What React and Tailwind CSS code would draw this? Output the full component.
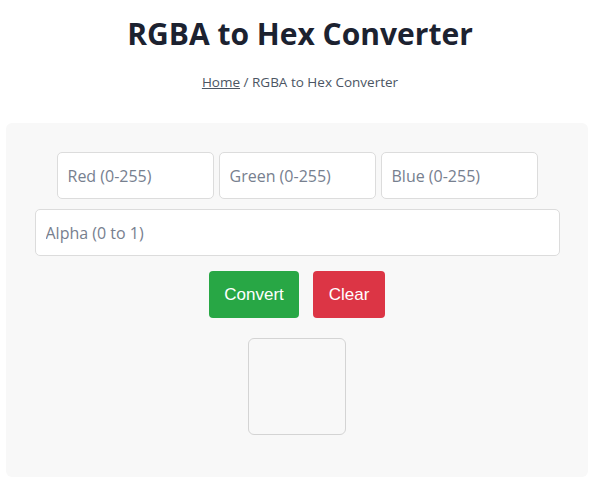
import { useState } from 'react'

const fieldClass =
  'h-[47px] rounded-[5px] border border-[#dcdcdc] bg-white px-[10px] text-[16px] text-[#374151] placeholder:text-[#77808f] outline-none'

const App = () => {
  const [rgba, setRgba] = useState({ r: '', g: '', b: '', a: '' })
  const [hex, setHex] = useState('')

  const convert = () => {
    const toHex = (n) => Math.max(0, Math.min(255, Math.round(Number(n) || 0))).toString(16).padStart(2, '0')
    const alpha = rgba.a === '' ? 1 : Number(rgba.a)
    setHex('#' + toHex(rgba.r) + toHex(rgba.g) + toHex(rgba.b) + toHex(alpha * 255))
  }

  const clear = () => {
    setRgba({ r: '', g: '', b: '', a: '' })
    setHex('')
  }

  return (
    <div className="min-h-[495px] bg-white font-['Open_Sans','Noto_Sans',sans-serif] text-[#1f2937]">
      <h1 className="pt-[14px] text-center text-[30px] font-bold leading-[40px] text-[#1c2230]">
        RGBA to Hex Converter
      </h1>
      <p className="mt-[18px] text-center text-[13.5px] text-[#4b5563]">
        <a href="#" className="underline">Home</a> / RGBA to Hex Converter
      </p>

      <div className="mx-[6px] mt-[31px] flex h-[354px] w-[582px] flex-col items-center rounded-[6px] bg-[#f8f8f8] pt-[29px]">
        <div className="flex gap-[5px]">
          <input
            className={fieldClass + ' w-[157px]'}
            placeholder="Red (0-255)"
            value={rgba.r}
            onChange={(e) => setRgba({ ...rgba, r: e.target.value })}
          />
          <input
            className={fieldClass + ' w-[157px]'}
            placeholder="Green (0-255)"
            value={rgba.g}
            onChange={(e) => setRgba({ ...rgba, g: e.target.value })}
          />
          <input
            className={fieldClass + ' w-[157px]'}
            placeholder="Blue (0-255)"
            value={rgba.b}
            onChange={(e) => setRgba({ ...rgba, b: e.target.value })}
          />
        </div>
        <input
          className={fieldClass + ' mt-[10px] w-[525px]'}
          placeholder="Alpha (0 to 1)"
          value={rgba.a}
          onChange={(e) => setRgba({ ...rgba, a: e.target.value })}
        />

        <div className="mt-[15px] flex gap-[14px] font-['Liberation_Sans',Arial,sans-serif] text-[17px] text-white">
          <button onClick={convert} className="h-[47px] w-[90px] rounded-[4px] bg-[#28a745]">
            Convert
          </button>
          <button onClick={clear} className="h-[47px] w-[72px] rounded-[4px] bg-[#dc3545]">
            Clear
          </button>
        </div>

        <div
          className="mt-[20px] h-[97px] w-[98px] rounded-[6px] border border-[#d4d4d4]"
          style={{ backgroundColor: hex || 'transparent' }}
        />
      </div>
    </div>
  )
}

export default App
